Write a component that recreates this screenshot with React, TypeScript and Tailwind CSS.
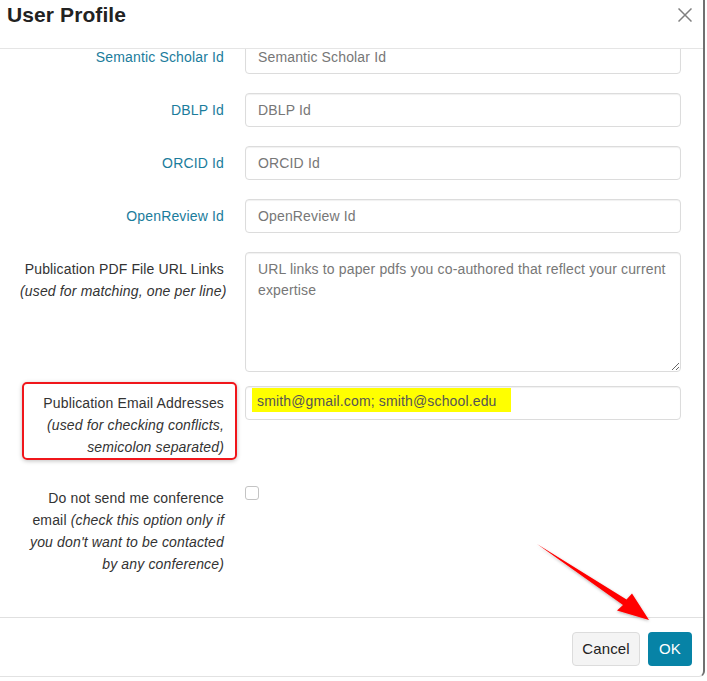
import React from "react";

// ── Field rows ──
const idFields = [
  { label: "Semantic Scholar Id", placeholder: "Semantic Scholar Id" },
  { label: "DBLP Id", placeholder: "DBLP Id" },
  { label: "ORCID Id", placeholder: "ORCID Id" },
  { label: "OpenReview Id", placeholder: "OpenReview Id" },
];

const inputCls =
  "block w-full h-[34px] border border-[#dcdcdc] rounded-[4px] px-[12px] text-[14px] tracking-[0.15px] text-[#555] bg-white shadow-[inset_0_1px_1px_rgba(0,0,0,0.06)] placeholder:text-[#777] outline-none";

function Row({ label, children, className = "" }: { label: React.ReactNode; children: React.ReactNode; className?: string }) {
  return (
    <div className={`flex ${className}`}>
      <div className="w-[224px] shrink-0 pl-[20px] pt-[6px] text-right leading-[22px]">{label}</div>
      <div className="ml-[21px] w-[436px]">{children}</div>
    </div>
  );
}

export default function App() {
  return (
    <div className="relative w-[707px] h-[681px] bg-white overflow-hidden font-['Liberation_Sans',Arial,sans-serif] text-[14px] tracking-[0.15px] text-[#333]">
      {/* Modal */}
      <div className="w-[705px] h-[677px] flex flex-col bg-white border-r-2 border-b border-r-[#707070] border-b-[#e2e2e2] rounded-br-[6px]">
        {/* Header */}
        <div className="h-[49px] shrink-0 flex justify-between items-start border-b border-[#e5e5e5]">
          <h1 className="pl-[7px] text-[21px] font-bold leading-[30px] tracking-[0.1px] text-[#222]">User Profile</h1>
          <button className="mt-[8px] mr-[11px] w-[14px] h-[14px]">
            <svg viewBox="0 0 14 14" width="14" height="14" stroke="#808080" strokeWidth="1.5" fill="none">
              <path d="M0.5 0.5 L13.5 13.5 M13.5 0.5 L0.5 13.5" />
            </svg>
          </button>
        </div>

        {/* Body (scrolled slightly) */}
        <div className="flex-1 overflow-hidden">
          <div className="-mt-[9px]">
            {idFields.map((f) => (
              <Row key={f.label} className="mb-[19px]" label={<span className="text-[#1b7c9c]">{f.label}</span>}>
                <input className={inputCls} placeholder={f.placeholder} />
              </Row>
            ))}

            <Row
              className="mb-[14px]"
              label={
                <>
                  Publication PDF File URL Links
                  <br />
                  <i className="whitespace-nowrap">(used for matching, one per line)</i>
                </>
              }
            >
              <textarea
                className="block w-full h-[120px] border border-[#dcdcdc] rounded-[4px] pl-[12px] pr-[6px] pt-[6px] text-[14px] tracking-[0.15px] leading-[21px] text-[#555] shadow-[inset_0_1px_1px_rgba(0,0,0,0.06)] placeholder:text-[#777] outline-none"
                placeholder="URL links to paper pdfs you co-authored that reflect your current expertise"
              />
            </Row>

            <Row
              className="mb-[23px]"
              label={
                <div className="relative">
                  {/* annotation box */}
                  <div className="absolute left-[2px] -top-[10px] -right-[13px] -bottom-[2px] border-2 border-[#f0161b] rounded-[5px] shadow-[0_1px_4px_rgba(0,0,0,0.25)]" />
                  Publication Email Addresses <i>(used for checking conflicts, semicolon separated)</i>
                </div>
              }
            >
              <div className="h-[34px] border border-[#dcdcdc] rounded-[4px] pl-[6px] pt-[1px] shadow-[inset_0_1px_1px_rgba(0,0,0,0.06)]">
                <span className="inline-block h-[24px] bg-[#ffff00] pl-[5px] pr-[14px] pt-[3px] leading-[21px] text-[#555]">
                  smith@gmail.com; smith@school.edu
                </span>
              </div>
            </Row>

            <Row
              label={
                <>
                  Do not send me conference email <i>(check this option only if you don't want to be contacted by any conference)</i>
                </>
              }
            >
              <div className="mt-[5px] w-[14px] h-[14px] border border-[#c4c4c4] rounded-[3px] bg-white" />
            </Row>
          </div>
        </div>

        {/* Footer */}
        <div className="h-[59px] shrink-0 flex justify-end items-start gap-[8px] pt-[14px] pr-[11px] border-t border-[#e0e0e0]">
          <button className="h-[34px] w-[68px] rounded-[4px] border border-[#dcdcdc] bg-[#f4f4f4] text-[15px] text-[#222]">Cancel</button>
          <button className="h-[34px] w-[44px] rounded-[4px] bg-[#0783a6] text-[15px] text-white">OK</button>
        </div>
      </div>

      {/* Red arrow annotation */}
      <svg className="absolute inset-0 pointer-events-none" width="707" height="681" viewBox="0 0 707 681">
        <defs>
          <filter id="sh" x="-10%" y="-10%" width="130%" height="130%">
            <feDropShadow dx="0" dy="1" stdDeviation="1.5" floodColor="#000" floodOpacity="0.3" />
          </filter>
        </defs>
        <polygon
          filter="url(#sh)"
          fill="#ff0000"
          points="537,544 626.5,599.5 632,593.5 649,620 617,610.5 623,605 "
        />
      </svg>
    </div>
  );
}
